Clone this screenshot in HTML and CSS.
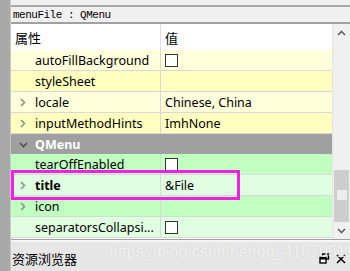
FILE: index.html
```html
<!DOCTYPE html>
<html lang="zh">
<head>
    <meta charset="UTF-8">
    <title>属性编辑器</title>
    <link rel="stylesheet" href="styles.css">
</head>
<body>
    <div class="window">
        <div class="side"></div>
        <div class="main">
            <div class="topbar"></div>
            <div class="objname">menuFile : QMenu</div>

            <div class="frame">
                <div class="grid">
                    <div class="head">
                        <div class="cell name">属性</div>
                        <div class="cell val">值</div>
                    </div>

                    <div class="row y1">
                        <div class="cell name"><span class="arrow"></span>autoFillBackground</div>
                        <div class="cell val"><span class="check"></span></div>
                    </div>
                    <div class="row y2">
                        <div class="cell name"><span class="arrow"></span>styleSheet</div>
                        <div class="cell val"></div>
                    </div>
                    <div class="row y1">
                        <div class="cell name"><span class="arrow"><svg width="6" height="9" viewBox="0 0 6 9"><path d="M1 1 L4.5 4.5 L1 8" fill="none" stroke="#8c8c8c" stroke-width="1.5"/></svg></span>locale</div>
                        <div class="cell val">Chinese, China</div>
                    </div>
                    <div class="row y2">
                        <div class="cell name"><span class="arrow"><svg width="6" height="9" viewBox="0 0 6 9"><path d="M1 1 L4.5 4.5 L1 8" fill="none" stroke="#8c8c8c" stroke-width="1.5"/></svg></span>inputMethodHints</div>
                        <div class="cell val">ImhNone</div>
                    </div>

                    <div class="row group">
                        <div class="cell name"><span class="arrow"><svg width="9" height="6" viewBox="0 0 9 6"><path d="M1 1 L4.5 4.5 L8 1" fill="none" stroke="#505050" stroke-width="1.6"/></svg></span>QMenu</div>
                    </div>

                    <div class="row g1">
                        <div class="cell name"><span class="arrow"></span>tearOffEnabled</div>
                        <div class="cell val"><span class="check"></span></div>
                    </div>
                    <div class="row g2">
                        <div class="cell name bold"><span class="arrow"><svg width="6" height="9" viewBox="0 0 6 9"><path d="M1 1 L4.5 4.5 L1 8" fill="none" stroke="#8c8c8c" stroke-width="1.5"/></svg></span>title</div>
                        <div class="cell val">&amp;File</div>
                    </div>
                    <div class="row g1">
                        <div class="cell name"><span class="arrow"><svg width="6" height="9" viewBox="0 0 6 9"><path d="M1 1 L4.5 4.5 L1 8" fill="none" stroke="#8c8c8c" stroke-width="1.5"/></svg></span>icon</div>
                        <div class="cell val"></div>
                    </div>
                    <div class="row g2">
                        <div class="cell name"><span class="arrow"></span>separatorsCollapsi...</div>
                        <div class="cell val"><span class="check"></span></div>
                    </div>
                    <div class="rest"></div>

                    <!-- marca del usuario sobre la fila title -->
                    <div class="mark"></div>
                </div>

                <div class="scroll">
                    <div class="btn up">
                        <svg width="9" height="6" viewBox="0 0 9 6"><path d="M1 5 L4.5 1.5 L8 5" fill="none" stroke="#606060" stroke-width="1.6"/></svg>
                    </div>
                    <div class="track">
                        <div class="thumb"><span class="grip"></span></div>
                    </div>
                    <div class="btn down">
                        <svg width="9" height="6" viewBox="0 0 9 6"><path d="M1 1 L4.5 4.5 L8 1" fill="none" stroke="#606060" stroke-width="1.6"/></svg>
                    </div>
                </div>
            </div>

            <div class="dock">
                <span class="dock-title">资源浏览器</span>
                <span class="dock-icons">
                    <svg width="11" height="11" viewBox="0 0 11 11"><rect x="3.5" y="1" width="6" height="5" fill="none" stroke="#000" stroke-width="1.4"/><rect x="1" y="4.5" width="6" height="5.5" fill="#fff" stroke="#000" stroke-width="1.4"/><line x1="1" y1="5.5" x2="7" y2="5.5" stroke="#000" stroke-width="2"/></svg>
                    <svg width="10" height="10" viewBox="0 0 10 10"><path d="M1 1 L9 9 M9 1 L1 9" stroke="#000" stroke-width="1.5"/></svg>
                </span>
                <span class="watermark">https://blog.csdn.net/qq_41070511</span>
            </div>
        </div>
    </div>
</body>
</html>
```

FILE: styles.css
```css
/* Estilo general */
body {
    margin: 0;
    padding: 0;
    background-color: #f0f0f0;
    font-family: "Noto Sans", "Noto Sans CJK SC", sans-serif;
    font-size: 12px;
    color: #000;
}

.window {
    display: flex;
    width: 350px;
    height: 271px;
    overflow: hidden;
}

.side {
    width: 10px;
    background-color: #a9a9a9;
    border-right: 1px solid #c8c8c8;
}

.main {
    flex: 1;
    display: flex;
    flex-direction: column;
    min-width: 0;
}

.topbar {
    height: 5px;
    border-bottom: 2px solid #a8a8a8;
    background-color: #f0f0f0;
}

.objname {
    height: 15px;
    line-height: 16px;
    padding-left: 2px;
    font-family: "Liberation Mono", "DejaVu Sans Mono", monospace;
    font-size: 11px;
    letter-spacing: -0.5px;
    background-color: #f0f0f0;
    border-bottom: 2px solid #a0a0a0;
    color: #000;
}

.frame {
    display: flex;
    height: 215px;
    border-bottom: 1px solid #a0a0a0;
    background-color: #fff;
}

.grid {
    flex: 1;
    position: relative;
    display: flex;
    flex-direction: column;
}

.head,
.row {
    display: grid;
    grid-template-columns: 150px 1fr;
}

.head {
    height: 26px;
    background-color: #fff;
    font-family: "Noto Sans CJK SC", sans-serif;
    font-size: 13px;
}

.head .cell {
    line-height: 27px;
    padding-left: 4px;
}

.head .name {
    border-right: 1px solid #e0e0e0;
}

.row {
    height: 20px;
    border-bottom: 1px solid #d8d8d8;
    font-size: 12.5px;
}

.row .cell {
    display: flex;
    align-items: center;
    line-height: 20px;
    padding-top: 1px;
    white-space: nowrap;
    overflow: hidden;
}

.row .name {
    border-right: 1px solid #d8d8d8;
    color: #000;
}

.row .val {
    padding-left: 4px;
}

.arrow {
    width: 24px;
    height: 20px;
    display: flex;
    align-items: center;
    justify-content: center;
    flex: none;
}

.bold {
    font-weight: bold;
}

.y1 { background-color: #ffffdc; }
.y2 { background-color: #ffffbf; }
.g1 { background-color: #c0ffc0; }
.g2 { background-color: #e0ffe0; }

.group {
    background-color: #a0a0a0;
    grid-template-columns: 1fr;
    border-bottom: none;
}

.group .name {
    border-right: none;
    color: #fff;
    font-weight: bold;
}

.check {
    width: 11px;
    height: 11px;
    border: 1px solid #333;
    background-color: #fff;
}

.rest {
    flex: 1;
    background-color: #fff;
}

.mark {
    position: absolute;
    left: 0;
    top: 146px;
    width: 223px;
    height: 24px;
    border: 3px solid #f51ee8;
}

.scroll {
    width: 17px;
    display: flex;
    flex-direction: column;
    background-color: #f0f0f0;
    border-left: 1px solid #e4e4e4;
}

.btn {
    height: 17px;
    display: flex;
    align-items: center;
    justify-content: center;
}

.track {
    flex: 1;
    display: flex;
    flex-direction: column;
    justify-content: flex-end;
}

.thumb {
    height: 52px;
    margin: 0 1px;
    background-color: #cdcdcd;
    display: flex;
    justify-content: center;
    padding-top: 20px;
    box-sizing: border-box;
}

.grip {
    width: 10px;
    height: 10px;
    background-color: #ececec;
}

.dock {
    position: relative;
    flex: 1;
    display: flex;
    align-items: center;
    justify-content: space-between;
    padding: 4px 4px 0 1px;
    border-top: 2px solid #f6f6f6;
    background-color: #e6e6e6;
}

.dock-title {
    font-family: "Noto Sans CJK SC", sans-serif;
    font-size: 13px;
    color: #000;
}

.dock-icons {
    display: flex;
    gap: 6px;
    align-items: center;
}

.watermark {
    position: absolute;
    left: 98px;
    top: 1px;
    font-family: "Liberation Sans", sans-serif;
    font-size: 16px;
    color: rgba(255, 255, 255, 0.75);
    text-shadow: 0 0 1px rgba(170, 170, 170, 0.5);
    white-space: nowrap;
}
```
